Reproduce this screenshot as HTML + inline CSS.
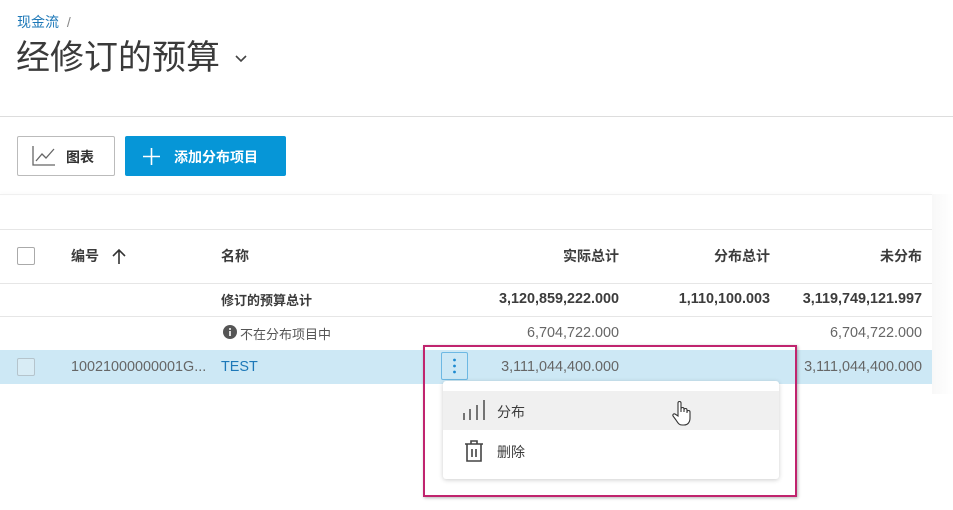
<!DOCTYPE html>
<html><head><meta charset="utf-8"><style>
*{box-sizing:border-box;margin:0;padding:0}
body{width:953px;height:510px;background:#fff;font-family:"Liberation Sans","Noto Sans CJK SC",sans-serif;color:#3c3c3c;position:relative;overflow:hidden}
.a{position:absolute}
.r{text-align:right}
.n{font-size:14.4px}
</style></head><body>
<div class="a" style="left:17px;top:12px;font-size:14px;color:#1d78b8">现金流 <span style="color:#888;margin-left:4px">/</span></div>
<div class="a" style="left:16px;top:36px;font-size:34px;color:#3a3a3a;line-height:44px">经修订的预算</div>
<svg class="a" style="left:234px;top:54px" width="14" height="10"><path d="M2 2l5 5 5-5" stroke="#444" stroke-width="1.6" fill="none"/></svg>
<div class="a" style="left:0;top:116px;width:953px;height:1px;background:#ddd"></div>
<div class="a" style="left:17px;top:136px;width:98px;height:40px;border:1px solid #bbb;border-radius:2px"></div>
<svg class="a" style="left:32px;top:145px" width="24" height="22"><path d="M1 1v19h22" stroke="#666" stroke-width="1.3" fill="none"/><path d="M4 16l6-7 4 4 8-9" stroke="#666" stroke-width="1.3" fill="none"/></svg>
<div class="a" style="left:66px;top:147px;font-size:14px;font-weight:bold;color:#333">图表</div>
<div class="a" style="left:125px;top:136px;width:161px;height:40px;background:#0696d7;border-radius:2px"></div>
<svg class="a" style="left:143px;top:148px" width="17" height="17"><path d="M8.5 0v17M0 8.5h17" stroke="#fff" stroke-width="1.6"/></svg>
<div class="a" style="left:174px;top:147px;font-size:14px;font-weight:bold;color:#fff">添加分布项目</div>
<div class="a" style="left:0;top:194px;width:932px;height:1px;background:#f0f0f0;box-shadow:0 -1px 3px rgba(0,0,0,.05)"></div>
<div class="a" style="left:932px;top:194px;width:21px;height:200px;background:linear-gradient(90deg,#f8f8f8,#fff)"></div>
<div class="a" style="left:0;top:229px;width:932px;height:1px;background:#e6e6e6"></div>
<div class="a" style="left:0;top:283px;width:932px;height:1px;background:#e6e6e6"></div>
<div class="a" style="left:0;top:316px;width:932px;height:1px;background:#e6e6e6"></div>
<div class="a" style="left:0;top:350px;width:932px;height:34px;background:#cde8f5"></div>
<div class="a" style="left:17px;top:247px;width:18px;height:18px;border:1px solid #aaa;border-radius:2px;background:#fff"></div>
<div class="a" style="left:71px;top:246px;font-size:14px;font-weight:bold">编号</div>
<svg class="a" style="left:112px;top:248px" width="14" height="16"><path d="M7 2v14M1 8l6-6 6 6" stroke="#333" stroke-width="1.6" fill="none"/></svg>
<div class="a" style="left:221px;top:246px;font-size:14px;font-weight:bold">名称</div>
<div class="a r" style="left:480px;width:139px;top:246px;font-size:14px;font-weight:bold">实际总计</div>
<div class="a r" style="left:630px;width:140px;top:246px;font-size:14px;font-weight:bold">分布总计</div>
<div class="a r" style="left:780px;width:142px;top:246px;font-size:14px;font-weight:bold">未分布</div>
<div class="a" style="left:221px;top:290px;font-size:13px;font-weight:bold">修订的预算总计</div>
<div class="a r n" style="left:440px;width:179px;top:291px;font-weight:bold">3,120,859,222.000</div>
<div class="a r n" style="left:630px;width:140px;top:291px;font-weight:bold">1,110,100.003</div>
<div class="a r n" style="left:770px;width:152px;top:291px;font-weight:bold">3,119,749,121.997</div>
<svg class="a" style="left:223px;top:325px" width="14" height="14"><circle cx="7" cy="7" r="7" fill="#555"/><rect x="6.2" y="6" width="1.6" height="5" fill="#fff"/><circle cx="7" cy="4" r="1" fill="#fff"/></svg>
<div class="a" style="left:240px;top:324px;font-size:13px;color:#555">不在分布项目中</div>
<div class="a r n" style="left:440px;width:179px;top:325px;color:#666">6,704,722.000</div>
<div class="a r n" style="left:770px;width:152px;top:325px;color:#666">6,704,722.000</div>
<div class="a" style="left:17px;top:358px;width:18px;height:18px;border:1px solid #b5c4cc;border-radius:2px;background:#d8ecf5"></div>
<div class="a n" style="left:71px;top:359px;color:#666">10021000000001G...</div>
<div class="a n" style="left:221px;top:359px;color:#1d78b8">TEST</div>
<div class="a r n" style="left:440px;width:179px;top:359px;color:#666">3,111,044,400.000</div>
<div class="a r n" style="left:770px;width:152px;top:359px;color:#666">3,111,044,400.000</div>
<div class="a" style="left:441px;top:352px;width:27px;height:28px;border:1px solid #6db8e3;border-radius:2px"></div>
<svg class="a" style="left:452px;top:358px" width="5" height="16"><circle cx="2.5" cy="2" r="1.4" fill="#1d8ad0"/><circle cx="2.5" cy="8" r="1.4" fill="#1d8ad0"/><circle cx="2.5" cy="14" r="1.4" fill="#1d8ad0"/></svg>
<div class="a" style="left:443px;top:381px;width:336px;height:98px;background:#fff;border-radius:3px;box-shadow:0 1px 5px rgba(0,0,0,.2)"></div>
<div class="a" style="left:443px;top:391px;width:336px;height:39px;background:#f0f0f0"></div>
<svg class="a" style="left:462px;top:399px" width="24" height="22"><path d="M2 14v7M8 10v11M15 6v15M22 1v20" stroke="#555" stroke-width="1.6"/></svg>
<div class="a" style="left:497px;top:402px;font-size:14px">分布</div>
<svg class="a" style="left:464px;top:440px" width="20" height="22"><path d="M1 4h18M7 4V1h6v3M3 4v17h14V4M8 9v8M12 9v8" stroke="#444" stroke-width="1.6" fill="none"/></svg>
<div class="a" style="left:497px;top:442px;font-size:14px">删除</div>
<svg class="a" style="left:672px;top:400px" width="22" height="28"><path d="M6 16V3a1.5 1.5 0 013 0v9V9a1.5 1.5 0 013 0v3-2a1.5 1.5 0 013 0v3-1a1.5 1.5 0 013 0v6c0 4-2 7-6 7h-2c-3 0-4-2-6-5l-3-4a1.5 1.5 0 012-2z" fill="#fff" stroke="#333" stroke-width="1.1"/></svg>
<div class="a" style="left:423px;top:345px;width:374px;height:152px;border:2px solid #c0246e;box-shadow:1px 1px 3px rgba(0,0,0,.3)"></div>
</body></html>
